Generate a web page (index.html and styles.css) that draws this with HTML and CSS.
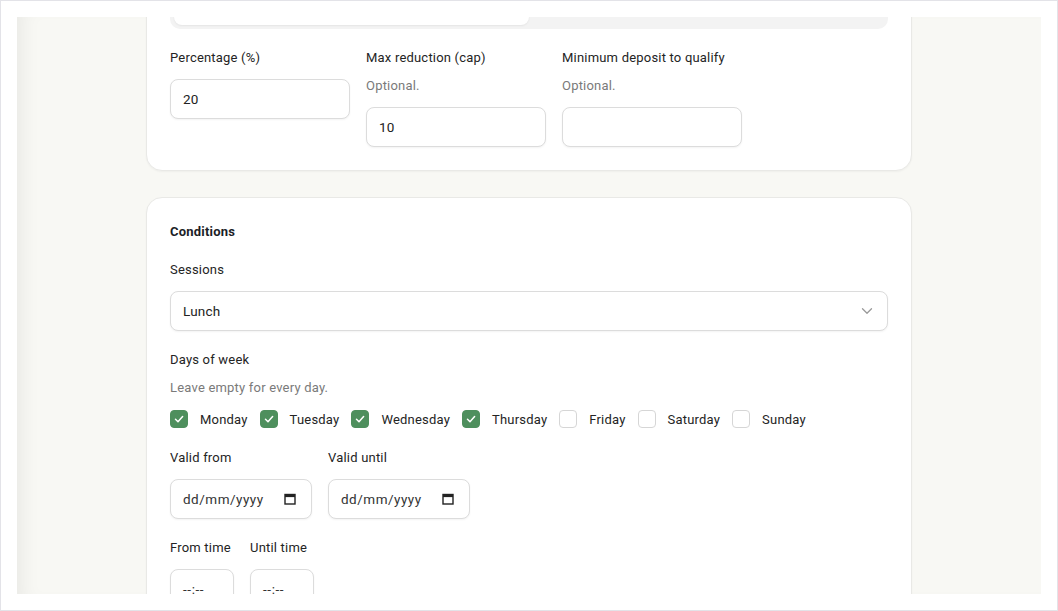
FILE: index.html
```html
<!DOCTYPE html>
<html lang="en">
<head>
<meta charset="utf-8">
<title>Promotion</title>
<link rel="stylesheet" href="styles.css">
</head>
<body>
<div class="frame">
  <div class="viewport">
    <div class="content">
      <section class="card card-first">
        <div class="segmented">
          <span class="seg seg-active"></span>
          <span class="seg"></span>
        </div>
        <div class="row3">
          <div class="field">
            <div class="label">Percentage (%)</div>
            <div class="input">20</div>
          </div>
          <div class="field">
            <div class="label">Max reduction (cap)</div>
            <div class="hint">Optional.</div>
            <div class="input">10</div>
          </div>
          <div class="field">
            <div class="label">Minimum deposit to qualify</div>
            <div class="hint">Optional.</div>
            <div class="input"></div>
          </div>
        </div>
      </section>

      <section class="card">
        <h2 class="heading">Conditions</h2>
        <div class="field">
          <div class="label">Sessions</div>
          <div class="input select">
            <span>Lunch</span>
            <svg class="chev" width="12" height="8" viewBox="0 0 12 8"><path d="M1.5 1.8 6 6.2l4.5-4.4" fill="none" stroke="#9a9a9a" stroke-width="1.3" stroke-linecap="round" stroke-linejoin="round"/></svg>
          </div>
        </div>
        <div class="field">
          <div class="label">Days of week</div>
          <div class="hint">Leave empty for every day.</div>
          <div class="days">
            <label class="day"><span class="cb cb-on"><svg width="12" height="12" viewBox="0 0 12 12"><path d="M2.5 6.3 5 8.7l4.6-5.2" fill="none" stroke="#fff" stroke-width="1.5" stroke-linecap="round" stroke-linejoin="round"/></svg></span>Monday</label>
            <label class="day"><span class="cb cb-on"><svg width="12" height="12" viewBox="0 0 12 12"><path d="M2.5 6.3 5 8.7l4.6-5.2" fill="none" stroke="#fff" stroke-width="1.5" stroke-linecap="round" stroke-linejoin="round"/></svg></span>Tuesday</label>
            <label class="day"><span class="cb cb-on"><svg width="12" height="12" viewBox="0 0 12 12"><path d="M2.5 6.3 5 8.7l4.6-5.2" fill="none" stroke="#fff" stroke-width="1.5" stroke-linecap="round" stroke-linejoin="round"/></svg></span>Wednesday</label>
            <label class="day"><span class="cb cb-on"><svg width="12" height="12" viewBox="0 0 12 12"><path d="M2.5 6.3 5 8.7l4.6-5.2" fill="none" stroke="#fff" stroke-width="1.5" stroke-linecap="round" stroke-linejoin="round"/></svg></span>Thursday</label>
            <label class="day"><span class="cb"></span>Friday</label>
            <label class="day"><span class="cb"></span>Saturday</label>
            <label class="day"><span class="cb"></span>Sunday</label>
          </div>
        </div>
        <div class="row-dates">
          <div class="field">
            <div class="label">Valid from</div>
            <div class="input date"><span class="dtext">dd/mm/yyyy</span><svg width="12" height="12" viewBox="0 0 12 12"><rect x="1" y="1.5" width="10" height="9.5" fill="none" stroke="#222" stroke-width="1.4"/><rect x="1" y="1.5" width="10" height="2.6" fill="#222"/></svg></div>
          </div>
          <div class="field">
            <div class="label">Valid until</div>
            <div class="input date"><span class="dtext">dd/mm/yyyy</span><svg width="12" height="12" viewBox="0 0 12 12"><rect x="1" y="1.5" width="10" height="9.5" fill="none" stroke="#222" stroke-width="1.4"/><rect x="1" y="1.5" width="10" height="2.6" fill="#222"/></svg></div>
          </div>
        </div>
        <div class="row-times">
          <div class="field">
            <div class="label">From time</div>
            <div class="input time">--:--</div>
          </div>
          <div class="field">
            <div class="label">Until time</div>
            <div class="input time">--:--</div>
          </div>
        </div>
      </section>
    </div>
  </div>
</div>
</body>
</html>
```

FILE: styles.css
```css
* { box-sizing: border-box; }

html, body {
  margin: 0;
  padding: 0;
  background: #ffffff;
}

body {
  font-family: Roboto, "Liberation Sans", Arial, sans-serif;
  font-size: 13px;
  letter-spacing: 0.2px;
  color: #242424;
}

.frame {
  width: 1058px;
  height: 611px;
  border: 1px solid #e3e3e8;
  padding: 16px;
  background: #ffffff;
}

.viewport {
  width: 1024px;
  height: 577px;
  overflow: hidden;
  background: #f8f8f4;
  box-shadow: inset 18px 0 20px -14px rgba(0, 0, 0, 0.07);
}

.content {
  display: flex;
  flex-direction: column;
  align-items: center;
  gap: 26px;
}

.card {
  width: 766px;
  background: #ffffff;
  border: 1px solid #e9e9e6;
  border-radius: 16px;
  padding: 23px;
  box-shadow: 0 1px 2px rgba(0, 0, 0, 0.04);
  display: flex;
  flex-direction: column;
  gap: 18px;
  flex-shrink: 0;
}

.card-first {
  margin-top: -52px;
}

.segmented {
  display: flex;
  background: #f3f3f3;
  border-radius: 10px;
  padding: 4px;
  height: 40px;
}

.seg {
  flex: 1;
  border-radius: 8px;
}

.seg-active {
  background: #ffffff;
  box-shadow: 0 1px 2px rgba(0, 0, 0, 0.06);
}

.row3 {
  display: flex;
  gap: 16px;
}

.row3 .field {
  width: 180px;
}

.field {
  display: flex;
  flex-direction: column;
}

.label {
  line-height: 22px;
  font-size: 13px;
  color: #242424;
  margin-bottom: 10px;
}

.hint {
  line-height: 22px;
  font-size: 13px;
  color: #7a7a7a;
  margin-top: -4px;
  margin-bottom: 10px;
}

.input {
  height: 40px;
  border: 1px solid #dcdcdc;
  border-radius: 8px;
  background: #fff;
  box-shadow: 0 1px 2px rgba(0, 0, 0, 0.05);
  display: flex;
  align-items: center;
  padding: 0 12px;
  font-size: 13.5px;
  color: #222;
}

.select {
  justify-content: space-between;
  padding-right: 14px;
}

.heading {
  margin: 0 0 -2px;
  font-size: 13px;
  line-height: 22px;
  font-weight: 700;
  color: #1b1e27;
}

.days {
  display: flex;
  gap: 12px;
  height: 20px;
  align-items: center;
}

.day {
  display: flex;
  align-items: center;
  gap: 12px;
  font-size: 13px;
  color: #242424;
}

.cb {
  width: 18px;
  height: 18px;
  border-radius: 4px;
  border: 1px solid #d6d6d6;
  background: #fff;
  display: flex;
  align-items: center;
  justify-content: center;
}

.cb-on {
  background: #4e8f5d;
  border-color: #4e8f5d;
}

.row-dates,
.row-times {
  display: flex;
  gap: 16px;
}

.date {
  width: 142px;
  justify-content: space-between;
  padding-right: 15px;
}

.dtext {
  letter-spacing: 0.5px;
  color: #333;
}

.time {
  width: 64px;
  color: #333;
  letter-spacing: 0.6px;
}
```
